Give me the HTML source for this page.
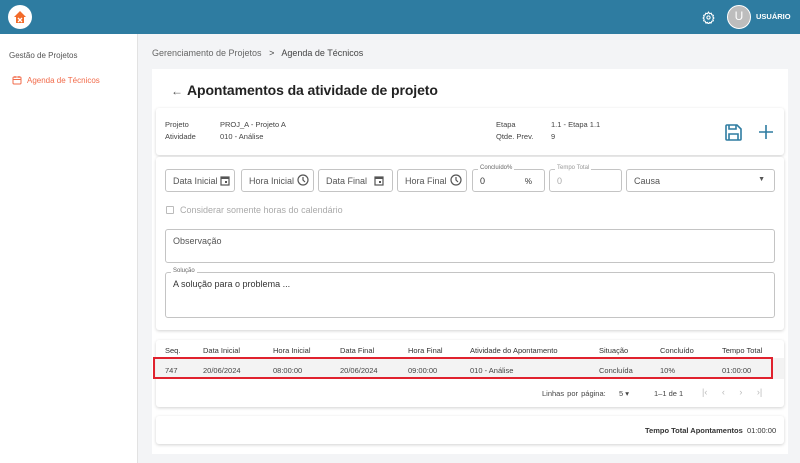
<!DOCTYPE html>
<html><head><meta charset="utf-8"><style>
*{box-sizing:border-box;margin:0;padding:0}
body{width:800px;height:463px;overflow:hidden;font-family:"Liberation Sans",sans-serif;background:#f3f4f6;position:relative;color:#333}
.a{position:absolute}
.hdr{left:0;top:0;width:800px;height:34px;background:#2e7ca1}
.side{left:0;top:34px;width:138px;height:429px;background:#fff;border-right:1px solid #e2e2e2}
.card{background:#fff;border-radius:3px;box-shadow:0 1px 3px rgba(0,0,0,.18)}
.fld{border:1px solid #c4c4c4;border-radius:3px;height:23px;font-size:9px;color:#555;padding:6px 0 0 7px;background:#fff}
.lg{position:absolute;top:-5px;left:5px;font-size:6px;background:#fff;padding:0 2px;color:#666}
.t{font-size:7.5px;color:#444}
.th{font-size:7.5px;color:#333;top:346px}
.td{font-size:7.5px;color:#444;top:366px}
</style></head><body>
<div class="a hdr"></div>
<div class="a" style="left:8px;top:5px;width:24px;height:24px;border-radius:50%;background:#fff"></div>
<svg class="a" style="left:13px;top:10px" width="14" height="14" viewBox="0 0 14 14"><path d="M7 1L1 7h2v6h8V7h2z" fill="#f26b2a"/><path d="M5 8l4 4M9 8l-4 4" stroke="#fff" stroke-width="1.3"/></svg>
<svg class="a" style="left:702px;top:11px" width="13" height="13" viewBox="0 0 24 24" fill="none" stroke="#fff" stroke-width="2"><circle cx="12" cy="12" r="3"/><path d="M12 2l2 3 3-1 1 3 3 1-1 3 2 2-2 2 1 3-3 1-1 3-3-1-2 3-2-3-3 1-1-3-3-1 1-3-2-2 2-2-1-3 3-1 1-3 3 1z"/></svg>
<div class="a" style="left:727px;top:5px;width:24px;height:24px;border-radius:50%;background:#bdbdbd;border:1.5px solid #fff;color:#fff;font-size:12px;text-align:center;line-height:21px">U</div>
<div class="a" style="left:756px;top:12px;font-size:7.5px;font-weight:bold;color:#fff">USUÁRIO</div>
<div class="a side"></div>
<div class="a" style="left:9px;top:51px;font-size:8px;color:#555">Gestão de Projetos</div>
<svg class="a" style="left:12px;top:75px" width="10" height="10" viewBox="0 0 10 10" fill="none" stroke="#f26b4a" stroke-width="1"><rect x="1" y="2" width="8" height="7" rx="1"/><path d="M1 4.5h8M3 1v2M7 1v2"/></svg>
<div class="a" style="left:27px;top:76px;font-size:8px;color:#f26b4a">Agenda de Técnicos</div>
<div class="a" style="left:152px;top:48px;font-size:9px;color:#666">Gerenciamento de Projetos &nbsp;&nbsp;<span style="color:#444">&gt;</span>&nbsp;&nbsp; <span style="color:#444">Agenda de Técnicos</span></div>
<div class="a" style="left:152px;top:69px;width:636px;height:385px;background:#fff"></div>
<div class="a" style="left:171px;top:84px;font-size:12px;color:#555">←</div>
<div class="a" style="left:187px;top:82px;font-size:14px;color:#222;font-weight:bold;letter-spacing:-0.1px">Apontamentos da atividade de projeto</div>
<div class="a card" style="left:156px;top:108px;width:628px;height:47px"></div>
<div class="a t" style="left:165px;top:119px;line-height:12px">Projeto<br>Atividade</div>
<div class="a t" style="left:220px;top:119px;line-height:12px">PROJ_A - Projeto A<br>010 - Análise</div>
<div class="a t" style="left:496px;top:119px;line-height:12px">Etapa<br>Qtde. Prev.</div>
<div class="a t" style="left:551px;top:119px;line-height:12px">1.1 - Etapa 1.1<br>9</div>
<svg class="a" style="left:724px;top:123px" width="19" height="19" viewBox="0 0 19 19" fill="none" stroke="#2e7ca1" stroke-width="1.6"><path d="M2 3a1 1 0 011-1h10l4 4v10a1 1 0 01-1 1H3a1 1 0 01-1-1z"/><path d="M5 2v4h7V2M5 17v-6h9v6"/></svg>
<svg class="a" style="left:758px;top:124px" width="16" height="16" viewBox="0 0 16 16" stroke="#2e7ca1" stroke-width="1.6"><path d="M8 1v14M1 8h14"/></svg>
<div class="a card" style="left:156px;top:157px;width:628px;height:173px"></div>
<div class="a fld" style="left:165px;top:169px;width:70px">Data Inicial</div>
<div class="a fld" style="left:241px;top:169px;width:73px">Hora Inicial</div>
<div class="a fld" style="left:318px;top:169px;width:75px">Data Final</div>
<div class="a fld" style="left:397px;top:169px;width:70px">Hora Final</div>
<svg class="a" style="left:220px;top:175px" width="10" height="11" viewBox="0 0 10 11"><rect x="1" y="2" width="8" height="8" fill="none" stroke="#555" stroke-width="1.2"/><rect x="1" y="2" width="8" height="2" fill="#555"/><rect x="5" y="6" width="2" height="2" fill="#555"/></svg>
<svg class="a" style="left:374px;top:175px" width="10" height="11" viewBox="0 0 10 11"><rect x="1" y="2" width="8" height="8" fill="none" stroke="#555" stroke-width="1.2"/><rect x="1" y="2" width="8" height="2" fill="#555"/><rect x="5" y="6" width="2" height="2" fill="#555"/></svg>
<svg class="a" style="left:297px;top:174px" width="12" height="12" viewBox="0 0 12 12" fill="none" stroke="#555" stroke-width="1.2"><circle cx="6" cy="6" r="5"/><path d="M6 3v3l2 2"/></svg>
<svg class="a" style="left:450px;top:174px" width="12" height="12" viewBox="0 0 12 12" fill="none" stroke="#555" stroke-width="1.2"><circle cx="6" cy="6" r="5"/><path d="M6 3v3l2 2"/></svg>
<div class="a fld" style="left:472px;top:169px;width:73px;color:#333">0<span class="lg">Concluído%</span><span style="position:absolute;right:12px;top:7px;font-size:8px">%</span></div>
<div class="a fld" style="left:549px;top:169px;width:73px;color:#aaa">0<span class="lg" style="color:#999">Tempo Total</span></div>
<div class="a fld" style="left:626px;top:169px;width:149px">Causa<span style="position:absolute;right:9px;top:6px;font-size:7px">▼</span></div>
<div class="a" style="left:166px;top:206px;width:8px;height:8px;border:1px solid #bbb;border-radius:1px"></div>
<div class="a" style="left:180px;top:205px;font-size:9px;color:#aaa">Considerar somente horas do calendário</div>
<div class="a fld" style="left:165px;top:229px;width:610px;height:34px">Observação</div>
<div class="a fld" style="left:165px;top:272px;width:610px;height:46px;color:#333">A solução para o problema ...<span class="lg">Solução</span></div>
<div class="a card" style="left:156px;top:340px;width:628px;height:67px"></div>
<div class="a th" style="left:165px">Seq.</div><div class="a th" style="left:203px">Data Inicial</div><div class="a th" style="left:273px">Hora Inicial</div><div class="a th" style="left:340px">Data Final</div><div class="a th" style="left:408px">Hora Final</div><div class="a th" style="left:470px">Atividade do Apontamento</div><div class="a th" style="left:599px">Situação</div><div class="a th" style="left:660px">Concluído</div><div class="a th" style="left:722px">Tempo Total</div>
<div class="a" style="left:156px;top:358px;width:628px;height:21px;background:#f3f3f3"></div>
<div class="a" style="left:153px;top:357px;width:620px;height:22px;border:2px solid #e0222e"></div>
<div class="a td" style="left:165px">747</div><div class="a td" style="left:203px">20/06/2024</div><div class="a td" style="left:273px">08:00:00</div><div class="a td" style="left:340px">20/06/2024</div><div class="a td" style="left:408px">09:00:00</div><div class="a td" style="left:470px">010 - Análise</div><div class="a td" style="left:599px">Concluída</div><div class="a td" style="left:660px">10%</div><div class="a td" style="left:722px">01:00:00</div>
<div class="a" style="left:542px;top:389px;font-size:7.5px;color:#444;word-spacing:1px">Linhas por página:</div>
<div class="a" style="left:619px;top:389px;font-size:7.5px;color:#444">5 ▾</div>
<div class="a" style="left:654px;top:389px;font-size:7.5px;color:#444">1–1 de 1</div>
<div class="a" style="left:702px;top:387px;font-size:9px;color:#bbb;word-spacing:12px">|‹ ‹ › ›|</div>
<div class="a card" style="left:156px;top:416px;width:628px;height:28px"></div>
<div class="a" style="left:645px;top:426px;font-size:7.5px;color:#333"><b>Tempo Total Apontamentos</b>&nbsp; 01:00:00</div>
</body></html>
